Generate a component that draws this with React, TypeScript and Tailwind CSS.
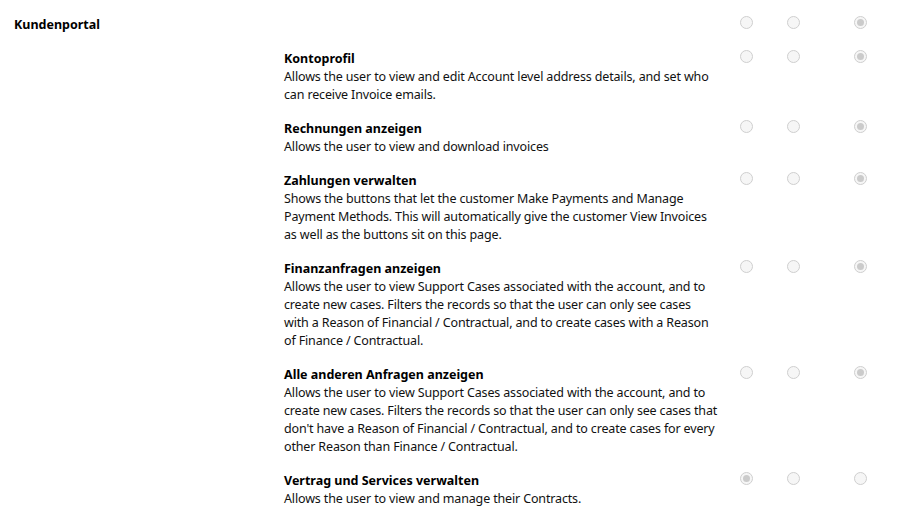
import React from "react";

type Item = { title: string; lines: string[]; checked: number };

const items: Item[] = [
  {
    title: "Kontoprofil",
    lines: [
      "Allows the user to view and edit Account level address details, and set who",
      "can receive Invoice emails.",
    ],
    checked: 2,
  },
  {
    title: "Rechnungen anzeigen",
    lines: ["Allows the user to view and download invoices"],
    checked: 2,
  },
  {
    title: "Zahlungen verwalten",
    lines: [
      "Shows the buttons that let the customer Make Payments and Manage",
      "Payment Methods. This will automatically give the customer View Invoices",
      "as well as the buttons sit on this page.",
    ],
    checked: 2,
  },
  {
    title: "Finanzanfragen anzeigen",
    lines: [
      "Allows the user to view Support Cases associated with the account, and to",
      "create new cases. Filters the records so that the user can only see cases",
      "with a Reason of Financial / Contractual, and to create cases with a Reason",
      "of Finance / Contractual.",
    ],
    checked: 2,
  },
  {
    title: "Alle anderen Anfragen anzeigen",
    lines: [
      "Allows the user to view Support Cases associated with the account, and to",
      "create new cases. Filters the records so that the user can only see cases that",
      "don't have a Reason of Financial / Contractual, and to create cases for every",
      "other Reason than Finance / Contractual.",
    ],
    checked: 2,
  },
  {
    title: "Vertrag und Services verwalten",
    lines: ["Allows the user to view and manage their Contracts."],
    checked: 0,
  },
];

function Radio({ checked }: { checked: boolean }) {
  return (
    <span className="flex h-[13px] w-[13px] items-center justify-center rounded-full border border-[#cfcfcf] bg-[#f6f6f6]">
      {checked && <span className="h-[7px] w-[7px] rounded-full bg-[#cbcbcb]" />}
    </span>
  );
}

function Radios({ checked }: { checked: number }) {
  return (
    <>
      <div className="flex justify-center">
        <Radio checked={checked === 0} />
      </div>
      <div className="flex justify-center">
        <Radio checked={checked === 1} />
      </div>
      <div className="flex justify-center">
        <Radio checked={checked === 2} />
      </div>
    </>
  );
}

export default function App() {
  return (
    <div
      className="min-h-[516px] w-[904px] bg-white pt-[16px] text-[12.5px] leading-[18px] text-[#111]"
      style={{ fontFamily: '"Noto Sans", "Open Sans", sans-serif' }}
    >
      <div className="grid grid-cols-[284px_440px_44px_50px_84px] gap-y-[16px]">
        <div className="pl-[14px] font-bold text-black">Kundenportal</div>
        <div />
        <Radios checked={2} />
        {items.map((it) => (
          <React.Fragment key={it.title}>
            <div />
            <div className="whitespace-nowrap">
              <div className="font-bold text-black">{it.title}</div>
              {it.lines.map((l) => (
                <div key={l} className="tracking-[-0.15px]">
                  {l}
                </div>
              ))}
            </div>
            <Radios checked={it.checked} />
          </React.Fragment>
        ))}
      </div>
    </div>
  );
}
